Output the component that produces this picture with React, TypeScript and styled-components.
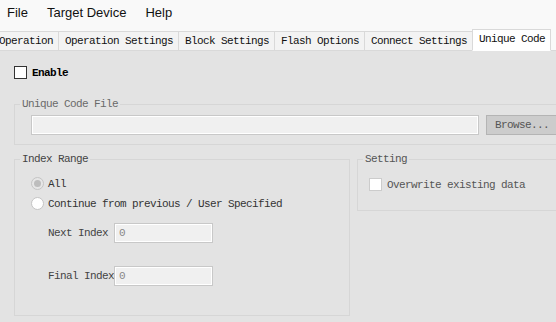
import React from "react";
import styled, { createGlobalStyle } from "styled-components";

const GlobalStyle = createGlobalStyle`
  html, body {
    margin: 0;
    padding: 0;
    background: #e3e3e3;
    overflow: hidden;
  }
  * {
    box-sizing: border-box;
  }
`;

const mono = `"Liberation Mono", "DejaVu Sans Mono", monospace`;

const Window = styled.div`
  width: 556px;
  height: 322px;
  background: #e3e3e3;
  overflow: hidden;
  font-family: ${mono};
  font-size: 11px;
  letter-spacing: -0.6px;
  color: #333;
`;

const MenuBar = styled.div`
  height: 25px;
  display: flex;
  align-items: center;
  gap: 19px;
  padding-left: 7px;
  background: #f9f9f9;
  font-family: "Liberation Sans", Arial, sans-serif;
  font-size: 13px;
  letter-spacing: 0;
  color: #111;
`;

const MenuItem = styled.span`
  line-height: 16px;
`;

const TabStrip = styled.div`
  height: 26px;
  display: flex;
  align-items: flex-end;
  background: #f9f9f9;
  border-bottom: 1px solid #d9d9d9;
  margin-left: -8px;
`;

const Tab = styled.div<{ $active?: boolean }>`
  height: ${(p) => (p.$active ? "22px" : "19px")};
  padding: 0 5px 0 6px;
  display: flex;
  align-items: center;
  flex: none;
  white-space: nowrap;
  color: #111;
  background: ${(p) => (p.$active ? "#ffffff" : "#f3f3f3")};
  border: 1px solid #d9d9d9;
  border-right: ${(p) => (p.$active ? "1px solid #d9d9d9" : "none")};
  border-bottom: ${(p) => (p.$active ? "1px solid #ffffff" : "none")};
  margin-bottom: ${(p) => (p.$active ? "-1px" : "0")};
  padding-bottom: ${(p) => (p.$active ? "2px" : "1px")};
`;

const Content = styled.div`
  padding: 15px 0 0 14px;
`;

const CheckRow = styled.label`
  display: flex;
  align-items: center;
  gap: 5px;
  height: 13px;
`;

const CheckBox = styled.span<{ $disabled?: boolean }>`
  width: 13px;
  height: 13px;
  flex: none;
  background: #fff;
  border: 1px solid ${(p) => (p.$disabled ? "#cccccc" : "#333333")};
`;

const CheckText = styled.span<{ $strong?: boolean; $muted?: boolean }>`
  color: ${(p) => (p.$muted ? "#555" : "#000")};
  font-weight: ${(p) => (p.$strong ? "bold" : "normal")};
`;

const Group = styled.fieldset<{ $width?: string }>`
  margin: 0;
  padding: 0;
  border: 1px solid #d6d6d6;
  min-width: 0;
  width: ${(p) => p.$width ?? "auto"};
`;

const Legend = styled.legend<{ $color?: string }>`
  margin-left: 5px;
  padding: 0 2px;
  line-height: 12px;
  color: ${(p) => p.$color ?? "#555"};
`;

const GroupBody = styled.div<{ $pad: string }>`
  padding: ${(p) => p.$pad};
`;

const FileGroup = styled(Group)`
  margin: 19px -30px 0 0;
`;

const FileRow = styled.div`
  display: flex;
  gap: 7px;
`;

const TextBox = styled.div<{ $width: number }>`
  width: ${(p) => p.$width}px;
  height: 20px;
  flex: none;
  display: flex;
  align-items: center;
  padding-left: 4px;
  background: #f0f0f0;
  border: 1px solid #c8c8c8;
  box-shadow: inset 0 0 0 1px #ffffff;
  color: #888;
`;

const BrowseButton = styled.div`
  width: 80px;
  height: 20px;
  flex: none;
  display: flex;
  align-items: center;
  padding-left: 8px;
  background: #cccccc;
  border: 1px solid #b4b4b4;
  color: #555;
`;

const BottomRow = styled.div`
  display: flex;
  align-items: flex-start;
  gap: 7px;
  margin-top: 8px;
`;

const SettingGroup = styled(Group)`
  flex: 1;
  margin-right: -30px;
`;

const RadioList = styled.div`
  display: flex;
  flex-direction: column;
  gap: 7px;
`;

const RadioRow = styled.div`
  display: flex;
  align-items: center;
  gap: 4px;
  height: 13px;
  color: #333;
`;

const Radio = styled.span<{ $checked?: boolean }>`
  width: 13px;
  height: 13px;
  flex: none;
  border-radius: 50%;
  border: 1px solid #c4c4c4;
  background: ${(p) => (p.$checked ? "#e6e6e6" : "#ffffff")};
  display: flex;
  align-items: center;
  justify-content: center;
  &::after {
    content: "";
    width: 7px;
    height: 7px;
    border-radius: 50%;
    background: ${(p) => (p.$checked ? "#bdbdbd" : "transparent")};
  }
`;

const FieldList = styled.div`
  display: flex;
  flex-direction: column;
  gap: 23px;
  margin-top: 13px;
  padding-left: 17px;
`;

const FieldRow = styled.div`
  display: flex;
  align-items: center;
`;

const FieldLabel = styled.span`
  width: 66px;
  flex: none;
  color: #444;
`;

const tabs = [
  "Operation",
  "Operation Settings",
  "Block Settings",
  "Flash Options",
  "Connect Settings",
  "Unique Code",
];

export default function App() {
  return (
    <Window>
      <GlobalStyle />
      <MenuBar>
        <MenuItem>File</MenuItem>
        <MenuItem>Target Device</MenuItem>
        <MenuItem>Help</MenuItem>
      </MenuBar>
      <TabStrip>
        {tabs.map((t) => (
          <Tab key={t} $active={t === "Unique Code"}>
            {t}
          </Tab>
        ))}
      </TabStrip>
      <Content>
        <CheckRow>
          <CheckBox />
          <CheckText $strong>Enable</CheckText>
        </CheckRow>

        <FileGroup>
          <Legend $color="#6a6a6a">Unique Code File</Legend>
          <GroupBody $pad="5px 0 9px 16px">
            <FileRow>
              <TextBox $width={448} />
              <BrowseButton>Browse...</BrowseButton>
            </FileRow>
          </GroupBody>
        </FileGroup>

        <BottomRow>
          <Group $width="336px">
            <Legend $color="#444">Index Range</Legend>
            <GroupBody $pad="12px 0 29px 16px">
              <RadioList>
                <RadioRow>
                  <Radio $checked />
                  All
                </RadioRow>
                <RadioRow>
                  <Radio />
                  Continue from previous / User Specified
                </RadioRow>
              </RadioList>
              <FieldList>
                <FieldRow>
                  <FieldLabel>Next Index</FieldLabel>
                  <TextBox $width={99}>0</TextBox>
                </FieldRow>
                <FieldRow>
                  <FieldLabel>Final Index</FieldLabel>
                  <TextBox $width={99}>0</TextBox>
                </FieldRow>
              </FieldList>
            </GroupBody>
          </Group>

          <SettingGroup>
            <Legend $color="#555">Setting</Legend>
            <GroupBody $pad="13px 0 19px 11px">
              <CheckRow>
                <CheckBox $disabled />
                <CheckText $muted>Overwrite existing data</CheckText>
              </CheckRow>
            </GroupBody>
          </SettingGroup>
        </BottomRow>
      </Content>
    </Window>
  );
}
